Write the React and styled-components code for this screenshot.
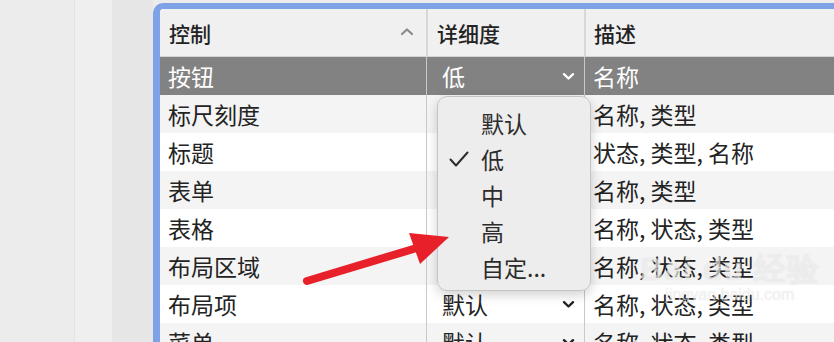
import React from 'react';
import styled, { createGlobalStyle } from 'styled-components';

const GlobalStyle = createGlobalStyle`
  html, body {
    margin: 0;
    padding: 0;
    background: #ececec;
    font-family: "Noto Sans CJK SC", "Noto Sans", sans-serif;
  }
`;

const Page = styled.div`
  position: relative;
  display: flex;
  width: 834px;
  height: 342px;
  overflow: hidden;
`;

const Strip = styled.div`
  width: ${p => p.w}px;
  flex-shrink: 0;
  background: ${p => p.bg};
  border-right: ${p => (p.line ? '1px solid #e2e2e2' : 'none')};
`;

const Panel = styled.div`
  position: relative;
  flex: 1;
  margin-top: 3px;
  border-top: 6px solid #7ea2e5;
  border-left: 7px solid #7ea2e5;
  border-top-left-radius: 10px;
  background: #fff;
  overflow: hidden;
`;

const Grid = styled.div`
  display: grid;
  grid-template-columns: 266px 158px 1fr;
  width: 720px;
`;

const HeaderRow = styled(Grid)`
  height: 47px;
  background: #f0f0f0;
  border-bottom: 1px solid #d4d4d4;
`;

const HeadCell = styled.div`
  display: flex;
  align-items: center;
  justify-content: space-between;
  padding: 0 ${p => p.pr || 0}px 0 ${p => p.pl}px;
  font-size: 21px;
  font-weight: 500;
  color: #222;
  border-left: ${p => (p.divider ? '2px solid #d8d8d8' : 'none')};
  background-clip: padding-box;
  margin: ${p => (p.divider ? '0' : '0')};
`;

const Row = styled(Grid)`
  height: 38px;
  background: ${p => (p.selected ? '#828282' : p.alt ? '#f4f4f4' : '#ffffff')};
  color: ${p => (p.selected ? '#ffffff' : '#232323')};
`;

const Cell = styled.div`
  display: flex;
  align-items: center;
  justify-content: space-between;
  padding: 0 ${p => p.pr || 0}px 0 ${p => p.pl}px;
  font-size: 23px;
  white-space: nowrap;
  border-left: ${p => (p.divider ? '1px solid #c9c9c9' : 'none')};
`;

const SortIcon = styled.svg`
  width: 14px;
  height: 9px;
  margin-bottom: 2px;
`;

const Chevron = styled.svg`
  width: 13px;
  height: 9px;
`;

const Popup = styled.div`
  position: absolute;
  left: 277px;
  top: 87px;
  width: 154px;
  height: 195px;
  box-sizing: border-box;
  padding-top: 8px;
  background: rgba(236, 236, 236, 0.97);
  border: 1px solid #c4c4c4;
  border-radius: 10px;
  box-shadow: 0 4px 12px rgba(0, 0, 0, 0.18);
  display: flex;
  flex-direction: column;
`;

const MenuItem = styled.div`
  display: flex;
  align-items: center;
  height: 36px;
  padding-left: 11px;
  font-size: 23px;
  color: #2c2c2c;
`;

const Check = styled.span`
  display: inline-flex;
  width: 32px;
`;

const Watermark = styled.div`
  position: absolute;
  left: 640px;
  top: 252px;
  display: flex;
  flex-direction: column;
  align-items: center;
  color: rgba(255, 255, 255, 0.55);
  text-shadow: 0 0 1px rgba(160, 160, 160, 0.35);
  pointer-events: none;
`;

const WmTitle = styled.div`
  font-family: "Liberation Sans", sans-serif;
  font-size: 32px;
  font-weight: 700;
  letter-spacing: 1px;
  line-height: 34px;
`;

const WmSub = styled.div`
  font-family: "Liberation Sans", sans-serif;
  font-size: 16px;
  line-height: 18px;
`;

const Arrow = styled.svg`
  position: absolute;
  left: 0;
  top: 0;
  width: 834px;
  height: 342px;
  pointer-events: none;
`;

const rows = [
  { name: '按钮', level: '低', desc: '名称', selected: true },
  { name: '标尺刻度', level: '', desc: '名称, 类型' },
  { name: '标题', level: '', desc: '状态, 类型, 名称' },
  { name: '表单', level: '', desc: '名称, 类型' },
  { name: '表格', level: '', desc: '名称, 状态, 类型' },
  { name: '布局区域', level: '', desc: '名称, 状态, 类型' },
  { name: '布局项', level: '默认', desc: '名称, 状态, 类型' },
  { name: '菜单', level: '默认', desc: '名称, 状态, 类型' },
];

const menu = ['默认', '低', '中', '高', '自定...'];

const ChevronDown = ({ color }) => (
  <Chevron viewBox="0 0 13 9">
    <path d="M2 2.2 L6.5 6.5 L11 2.2" fill="none" stroke={color} strokeWidth="2.4" strokeLinecap="round" strokeLinejoin="round" />
  </Chevron>
);

const App = () => (
  <Page>
    <GlobalStyle />
    <Strip w={74} bg="#ececec" line />
    <Strip w={37} bg="#efefef" />
    <Strip w={41} bg="#e6e6e6" />
    <Panel>
      <HeaderRow>
        <HeadCell pl={9} pr={12}>
          控制
          <SortIcon viewBox="0 0 14 9">
            <path d="M2 7 L7 2.5 L12 7" fill="none" stroke="#8a8a8a" strokeWidth="2.2" strokeLinecap="round" strokeLinejoin="round" />
          </SortIcon>
        </HeadCell>
        <HeadCell pl={9} divider>详细度</HeadCell>
        <HeadCell pl={8} divider>描述</HeadCell>
      </HeaderRow>
      {rows.map((r, i) => (
        <Row key={r.name} selected={r.selected} alt={i % 2 === 1}>
          <Cell pl={8}>{r.name}</Cell>
          <Cell pl={15} pr={9} divider>
            {r.level}
            {r.level && <ChevronDown color={r.selected ? '#ffffff' : '#222222'} />}
          </Cell>
          <Cell pl={8} divider>{r.desc}</Cell>
        </Row>
      ))}
      <Popup>
        {menu.map(m => (
          <MenuItem key={m}>
            <Check>
              {m === '低' && (
                <svg width="20" height="16" viewBox="0 0 20 16">
                  <path d="M1.5 8.5 L7 14.5 L18.5 1.5" fill="none" stroke="#2c2c2c" strokeWidth="2" strokeLinecap="round" strokeLinejoin="round" />
                </svg>
              )}
            </Check>
            {m}
          </MenuItem>
        ))}
      </Popup>
    </Panel>
    <Watermark>
      <WmTitle>Bai du 经验</WmTitle>
      <WmSub>jingyan.baidu.com</WmSub>
    </Watermark>
    <Arrow viewBox="0 0 834 342">
      <line x1="307" y1="281" x2="420" y2="247" stroke="#e8202a" strokeWidth="8" strokeLinecap="round" />
      <polygon points="449,237 409,233 420,264" fill="#e8202a" />
    </Arrow>
  </Page>
);

export default App;
